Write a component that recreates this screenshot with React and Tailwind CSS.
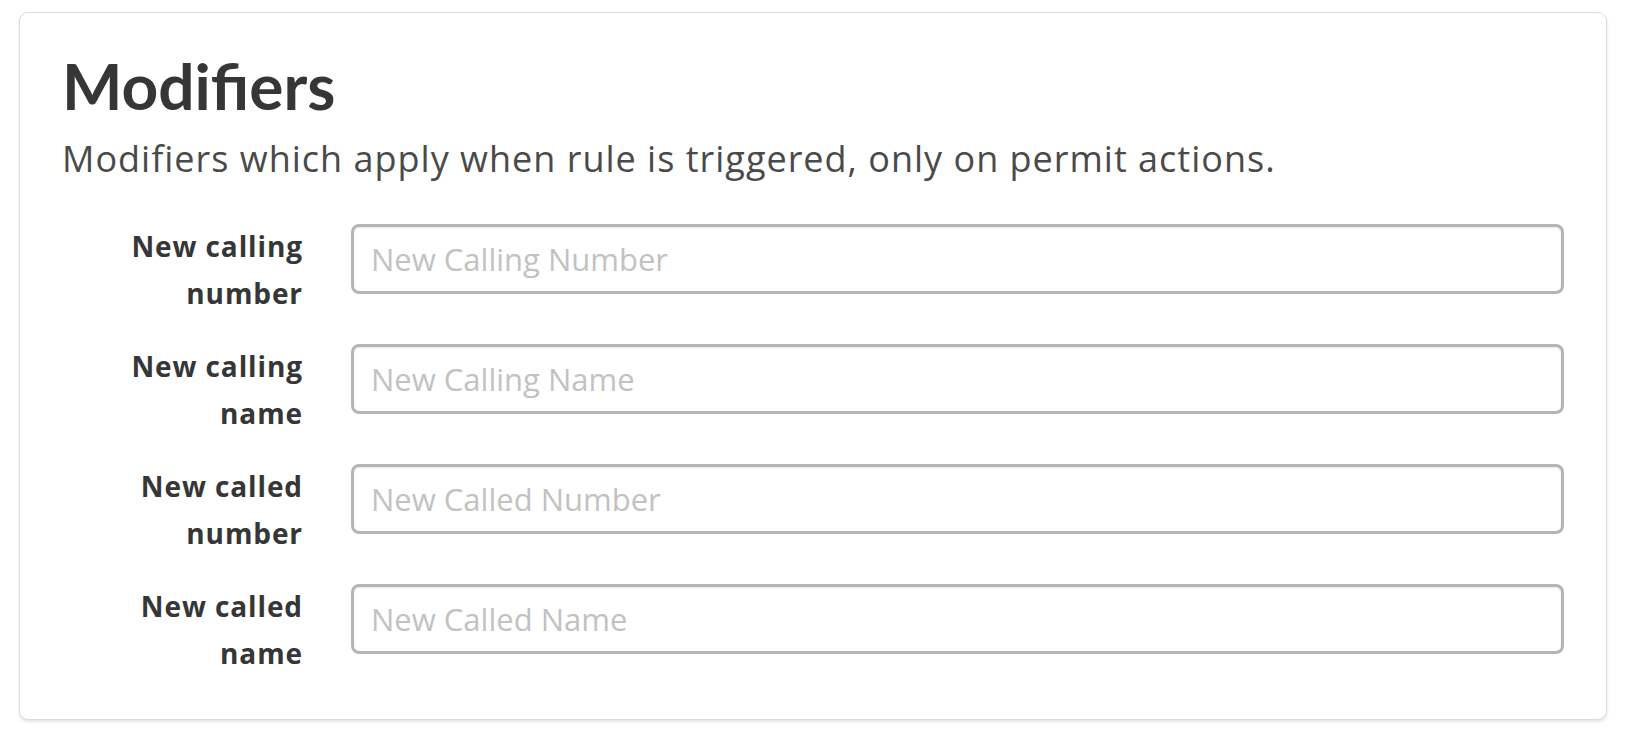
import React from 'react';

const fields = [
  { label: ['New calling', 'number'], placeholder: 'New Calling Number' },
  { label: ['New calling', 'name'], placeholder: 'New Calling Name' },
  { label: ['New called', 'number'], placeholder: 'New Called Number' },
  { label: ['New called', 'name'], placeholder: 'New Called Name' },
];

const Field = ({ label, placeholder }) => (
  <div className="flex items-start gap-[48px]">
    <label className="w-[241px] shrink-0 text-right text-[28px] leading-[47px] tracking-[0.9px] font-bold text-[#363636] -mt-[1px]">
      {label[0]}
      <br />
      {label[1]}
    </label>
    <input
      type="text"
      placeholder={placeholder}
      className="flex-1 h-[70px] rounded-[8px] border-[3px] border-[#b5b5b5] bg-white px-[17px] text-[31px] text-[#363636] placeholder:text-[#c2c2c2] outline-none shadow-[inset_0_1px_2px_rgba(10,10,10,0.1)]"
    />
  </div>
);

const App = () => {
  return (
    <div className="min-h-screen bg-white pt-[12px] pl-[19px] font-['Open_Sans',sans-serif]">
      <div className="w-[1588px] h-[708px] rounded-[9px] border border-[#dcdcdc] bg-white shadow-[0_2px_3px_rgba(10,10,10,0.1)] px-[42px] pt-[34px]">
        <h2 className="font-['Lato',sans-serif] text-[64px] leading-[77px] font-bold text-[#363636]">Modifiers</h2>
        <p className="mt-[9px] text-[36px] leading-[52px] tracking-[1px] text-[#4a4a4a]">
          Modifiers which apply when rule is triggered, only on permit actions.
        </p>
        <div className="mt-[39px] flex flex-col gap-[27px]">
          {fields.map((f) => (
            <Field key={f.placeholder} {...f} />
          ))}
        </div>
      </div>
    </div>
  );
};

export default App;
